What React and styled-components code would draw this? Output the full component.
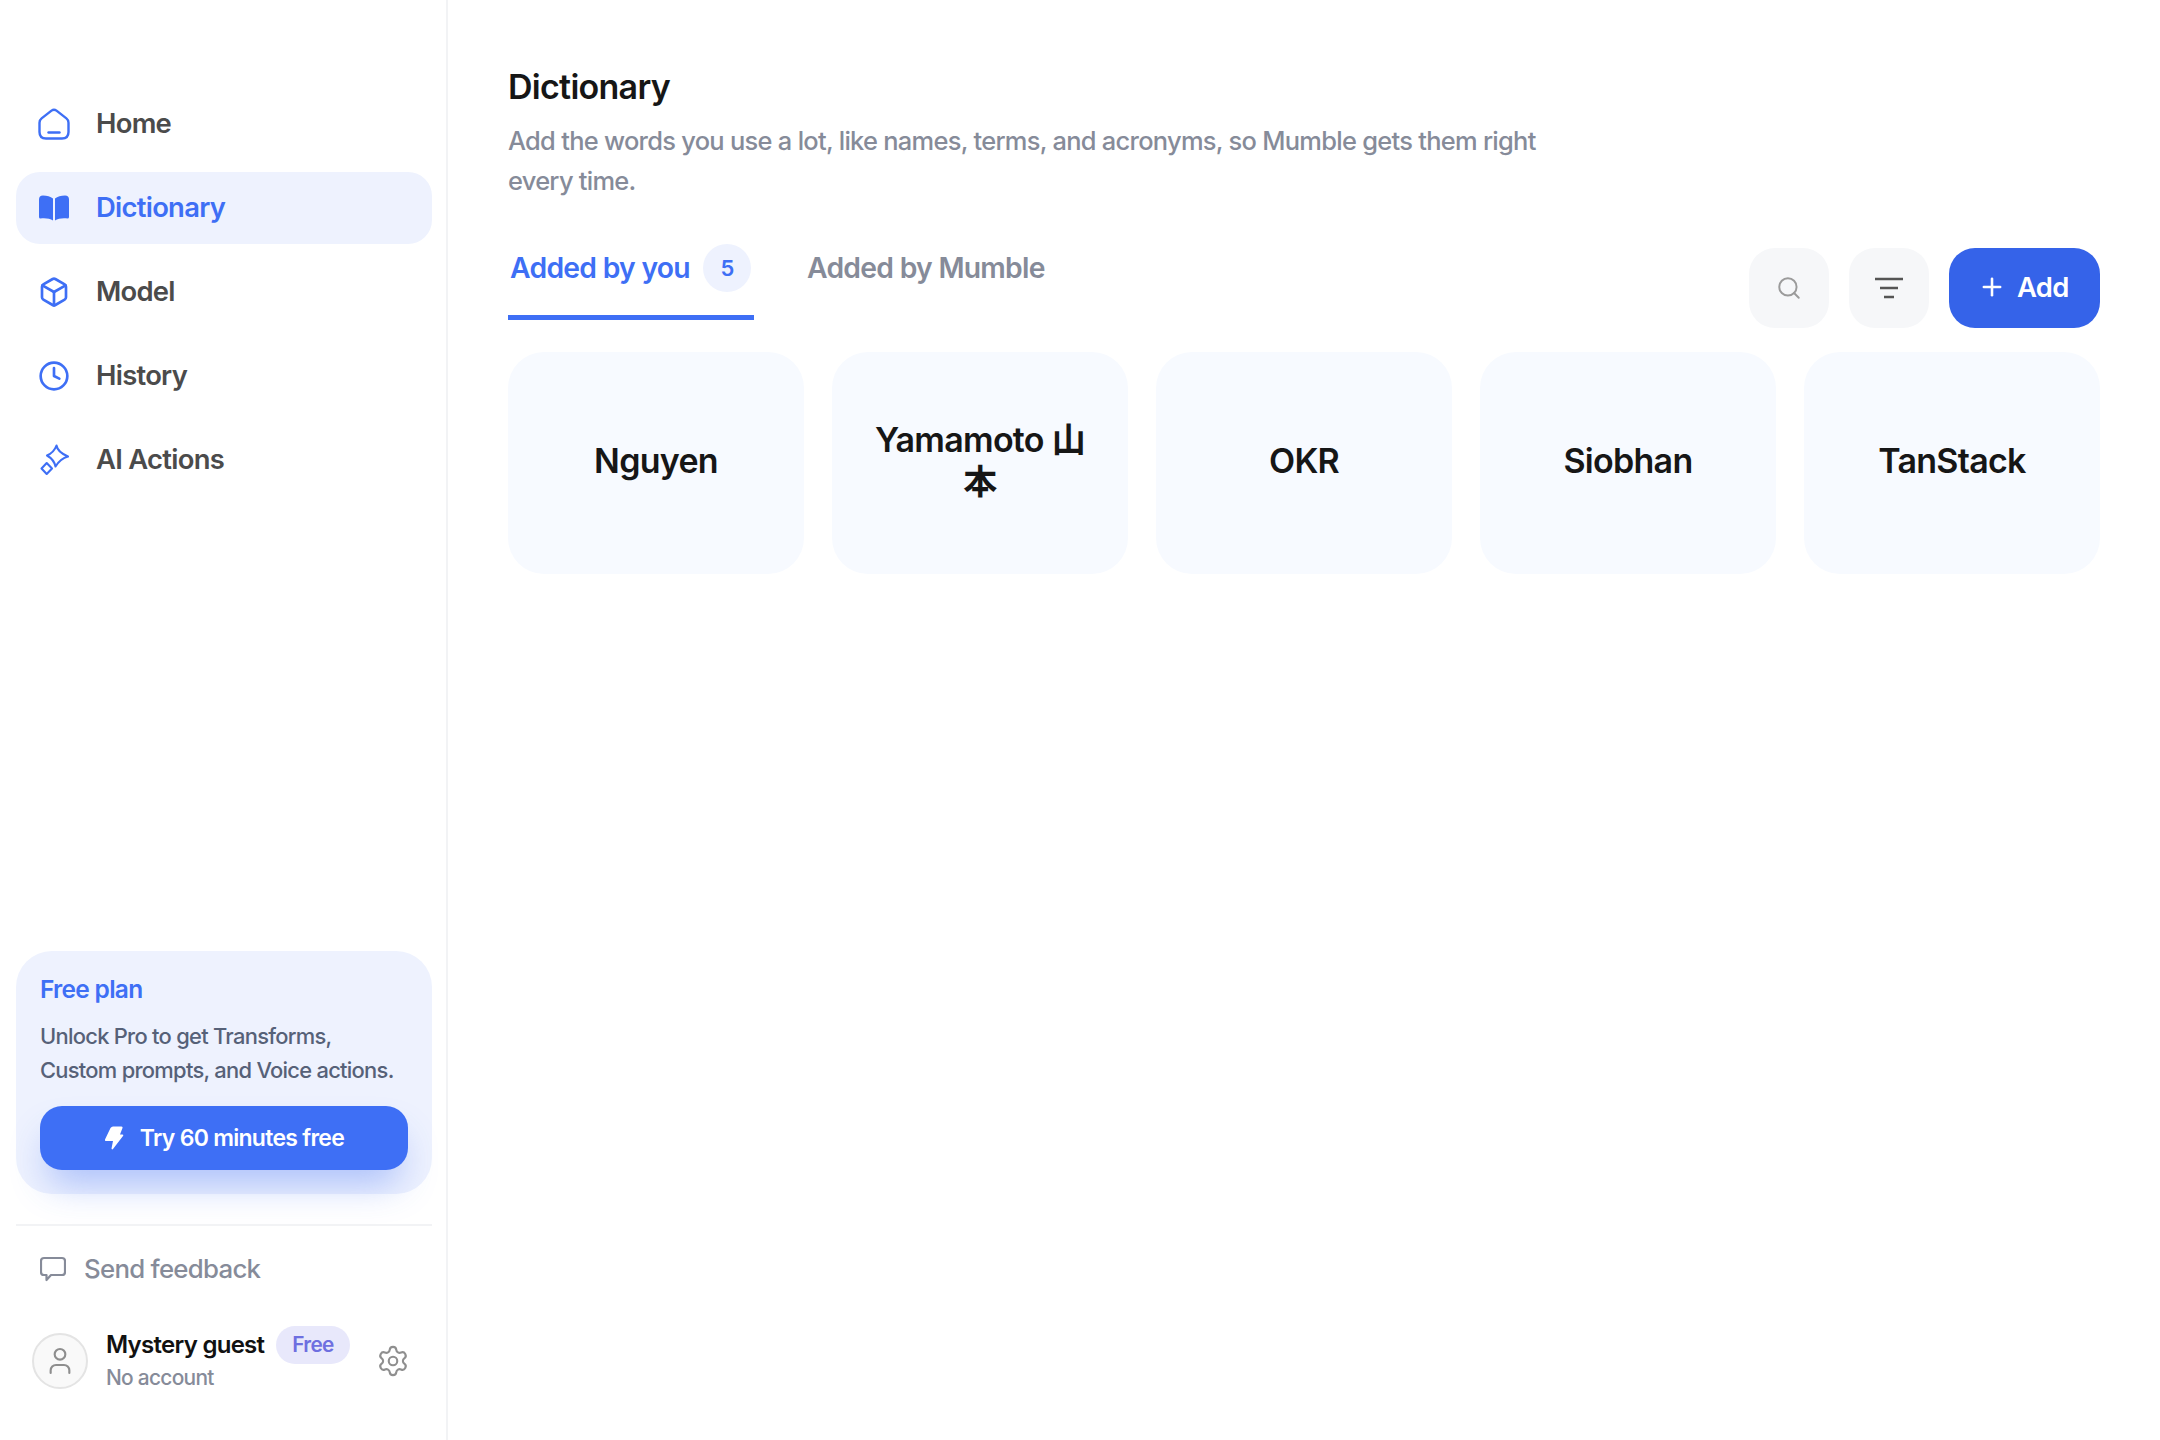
import React from "react";
import styled, { createGlobalStyle } from "styled-components";
import { Box, Clock, Search, Plus, Settings, User } from "lucide-react";

const blue = "#3e6ff5";
const muted = "#868b99";
const fontStack = `"Inter", "Noto Sans CJK JP", sans-serif`;

const Global = createGlobalStyle`
  html, body { margin: 0; padding: 0; background: #fff; }
  body {
    font-family: ${fontStack};
    letter-spacing: -0.045em;
    -webkit-font-smoothing: antialiased;
  }
  button { letter-spacing: inherit; font-family: inherit; }
`;

const Shell = styled.div`
  display: flex;
  width: 2160px;
  height: 1440px;
  overflow: hidden;
`;

const Sidebar = styled.aside`
  width: 448px;
  height: 100%;
  box-sizing: border-box;
  flex: none;
  display: flex;
  flex-direction: column;
  padding: 88px 14px 51px 16px;
  border-right: 2px solid #f2f3f5;
`;

const Nav = styled.nav`
  display: flex;
  flex-direction: column;
  gap: 12px;
`;

const NavItem = styled.a`
  display: flex;
  align-items: center;
  gap: 26px;
  height: 72px;
  padding-left: 22px;
  border-radius: 24px;
  font-size: 27.4px;
  font-weight: 600;
  color: ${(p) => (p.$active ? blue : "#4b4b4b")};
  background: ${(p) => (p.$active ? "#eef2fe" : "transparent")};
  svg {
    flex: none;
    width: 32px;
    color: ${blue};
  }
`;

const NavLabel = styled.span`
  padding-bottom: 2px;
`;

const PlanCard = styled.section`
  margin-top: auto;
  box-sizing: border-box;
  height: 243px;
  padding: 21px 24px 0;
  border-radius: 36px;
  background: #eef2fe;
`;

const PlanTitle = styled.div`
  font-size: 24.5px;
  line-height: 34px;
  font-weight: 600;
  color: ${blue};
`;

const PlanText = styled.p`
  margin: 13px 0 0;
  font-size: 21.9px;
  line-height: 34px;
  font-weight: 500;
  color: #566178;
`;

const TryButton = styled.button`
  display: flex;
  align-items: center;
  justify-content: center;
  gap: 16px;
  width: 100%;
  height: 64px;
  margin-top: 19px;
  border: 0;
  border-radius: 22px;
  background: ${blue};
  box-shadow: 0 22px 36px -8px rgba(62, 111, 245, 0.38);
  font-size: 23px;
  font-weight: 600;
  color: #fff;
`;

const Divider = styled.hr`
  width: 100%;
  height: 2px;
  margin: 30px 0 0;
  border: 0;
  background: #f2f3f5;
`;

const Feedback = styled.a`
  display: flex;
  align-items: center;
  gap: 18px;
  margin-top: 26px;
  padding-left: 24px;
  font-size: 25.8px;
  line-height: 34px;
  font-weight: 500;
  color: ${muted};
`;

const UserRow = styled.div`
  display: flex;
  align-items: center;
  margin-top: 47px;
  padding-left: 16px;
`;

const Avatar = styled.div`
  width: 56px;
  height: 56px;
  box-sizing: border-box;
  flex: none;
  display: flex;
  align-items: center;
  justify-content: center;
  border: 2px solid #e4e4e4;
  border-radius: 50%;
  background: #f9f9f9;
  color: #8e8e8e;
`;

const UserInfo = styled.div`
  margin-left: 18px;
  display: flex;
  flex-direction: column;
`;

const NameLine = styled.div`
  display: flex;
  align-items: center;
  gap: 12px;
  margin-top: -7.5px;
`;

const Name = styled.span`
  font-size: 24px;
  font-weight: 600;
  color: #111;
`;

const Badge = styled.span`
  display: flex;
  align-items: center;
  height: 38px;
  padding: 0 16px;
  border-radius: 19px;
  background: #e8e8fb;
  font-size: 20.8px;
  font-weight: 600;
  color: #6e6fe0;
`;

const Account = styled.span`
  margin-bottom: -2.5px;
  font-size: 20.9px;
  line-height: 28px;
  font-weight: 500;
  color: ${muted};
`;

const GearSlot = styled.div`
  margin-left: 26px;
  display: flex;
  color: #8f8f8f;
`;

const Main = styled.main`
  flex: 1;
  min-width: 0;
  padding: 64px 60px 0 60px;
`;

const Title = styled.h1`
  margin: 0;
  font-size: 34px;
  line-height: 46px;
  font-weight: 600;
  color: #161616;
`;

const Description = styled.p`
  margin: 11px 0 0;
  max-width: 1060px;
  font-size: 25.45px;
  line-height: 40px;
  font-weight: 500;
  color: ${muted};
`;

const TabBar = styled.div`
  display: flex;
  align-items: flex-start;
  margin-top: 43px;
`;

const Tab = styled.div`
  display: flex;
  align-items: center;
  gap: 13px;
  box-sizing: border-box;
  height: 76px;
  padding: 0 3px 24px 2px;
  font-size: 28.3px;
  font-weight: 600;
  color: ${(p) => (p.$active ? blue : muted)};
  border-bottom: 5px solid ${(p) => (p.$active ? blue : "transparent")};
  margin-right: 51px;
`;

const Count = styled.span`
  width: 48px;
  height: 48px;
  display: flex;
  align-items: center;
  justify-content: center;
  border-radius: 50%;
  background: #eef2fe;
  font-size: 22px;
`;

const Actions = styled.div`
  display: flex;
  gap: 20px;
  margin-left: auto;
  margin-top: 4px;
`;

const IconButton = styled.button`
  width: 80px;
  height: 80px;
  display: flex;
  align-items: center;
  justify-content: center;
  padding: 0;
  border: 0;
  border-radius: 26px;
  background: #f6f7f9;
  color: #9b9b9b;
`;

const AddButton = styled.button`
  width: 151px;
  height: 80px;
  display: flex;
  align-items: center;
  gap: 11px;
  padding: 0 0 2px 29px;
  border: 0;
  border-radius: 26px;
  background: #3563e9;
  font-size: 27.4px;
  font-weight: 600;
  color: #fff;
`;

const CardRow = styled.div`
  display: grid;
  grid-template-columns: repeat(5, 1fr);
  gap: 28px;
  margin-top: 24px;
`;

const WordCard = styled.div`
  height: 222px;
  box-sizing: border-box;
  display: flex;
  align-items: center;
  justify-content: center;
  padding: 0 38px 4px;
  border-radius: 36px;
  background: #f7faff;
  font-size: 34px;
  line-height: 42px;
  font-weight: 600;
  text-align: center;
  color: #161616;
`;

const HomeIcon = () => (
  <svg width="32" height="32" viewBox="0 0 32 32" fill="none" stroke="currentColor" strokeWidth="2.4" strokeLinecap="round" strokeLinejoin="round">
    <path d="M13.5 2.6 3.6 10.4Q1.5 12 1.5 14.8V24Q1.5 30.5 8 30.5H24Q30.5 30.5 30.5 24V14.8Q30.5 12 28.4 10.4L18.5 2.6Q16 .8 13.5 2.6Z" />
    <path d="M10.5 24.5H21.5" />
  </svg>
);

const BookIcon = () => (
  <svg width="32" height="32" viewBox="0 0 32 32" fill="currentColor">
    <path d="M1 7.5Q1 3.5 5 3.5C9 3.5 12.5 4.5 15 6.5V28.5C12 26.5 7.5 26 2.5 26.5Q1 26.5 1 25Z" />
    <path d="M31 7.5Q31 3.5 27 3.5C23 3.5 19.5 4.5 17 6.5V28.5C20 26.5 24.5 26 29.5 26.5Q31 26.5 31 25Z" />
  </svg>
);

const SparkIcon = () => (
  <svg width="32" height="32" viewBox="0 0 32 32" fill="none" stroke="currentColor" strokeWidth="2.1" strokeLinejoin="round">
    <path d="M18.5 1.5Q19.5 8 30 12.5 22.5 14.5 17.5 22.5 16 15.5 9 11.5 16 8.5 18.5 1.5Z" />
    <path d="M8.7 19 14 24.5 8.7 30 3.5 24.5Z" />
  </svg>
);

const BoltIcon = () => (
  <svg width="20" height="24" viewBox="0 0 20 24" fill="currentColor">
    <path d="M9 .5H17.5Q19 .5 18.5 2L16 8.5H18.5Q20 8.5 19 10L9 23Q8 24 7.5 22.5L9 15H2Q.5 15 1 13.5L6.5 2Q7.5.5 9 .5Z" />
  </svg>
);

const ChatIcon = () => (
  <svg width="26" height="26" viewBox="0 0 26 26" fill="none" stroke="currentColor" strokeWidth="2.2" strokeLinejoin="round">
    <path d="M4 2H22Q25 2 25 5V16Q25 19 22 19H11L6.5 24V19H4Q1 19 1 16V5Q1 2 4 2Z" />
  </svg>
);

const FilterIcon = () => (
  <svg width="28" height="22" viewBox="0 0 28 22" fill="none" stroke="#555" strokeWidth="2.6">
    <path d="M0 2H28M5 11H23M9 20H19" />
  </svg>
);

const navItems = [
  { label: "Home", icon: <HomeIcon /> },
  { label: "Dictionary", icon: <BookIcon />, active: true },
  { label: "Model", icon: <Box size={32} strokeWidth={2} /> },
  { label: "History", icon: <Clock size={32} strokeWidth={2} /> },
  { label: "AI Actions", icon: <SparkIcon /> },
];

const words = ["Nguyen", "Yamamoto 山本", "OKR", "Siobhan", "TanStack"];

export default function App() {
  return (
    <Shell>
      <Global />
      <Sidebar>
        <Nav>
          {navItems.map((item) => (
            <NavItem key={item.label} $active={item.active}>
              {item.icon}
              <NavLabel>{item.label}</NavLabel>
            </NavItem>
          ))}
        </Nav>
        <PlanCard>
          <PlanTitle>Free plan</PlanTitle>
          <PlanText>
            Unlock Pro to get Transforms,
            <br />
            Custom prompts, and Voice actions.
          </PlanText>
          <TryButton>
            <BoltIcon />
            Try 60 minutes free
          </TryButton>
        </PlanCard>
        <Divider />
        <Feedback>
          <ChatIcon />
          Send feedback
        </Feedback>
        <UserRow>
          <Avatar>
            <User size={32} strokeWidth={1.6} />
          </Avatar>
          <UserInfo>
            <NameLine>
              <Name>Mystery guest</Name>
              <Badge>Free</Badge>
            </NameLine>
            <Account>No account</Account>
          </UserInfo>
          <GearSlot>
            <Settings size={34} strokeWidth={1.5} />
          </GearSlot>
        </UserRow>
      </Sidebar>
      <Main>
        <Title>Dictionary</Title>
        <Description>
          Add the words you use a lot, like names, terms, and acronyms, so Mumble gets them right every time.
        </Description>
        <TabBar>
          <Tab $active>
            Added by you
            <Count>5</Count>
          </Tab>
          <Tab>Added by Mumble</Tab>
          <Actions>
            <IconButton>
              <Search size={26} strokeWidth={1.8} />
            </IconButton>
            <IconButton>
              <FilterIcon />
            </IconButton>
            <AddButton>
              <Plus size={28} strokeWidth={2.2} />
              Add
            </AddButton>
          </Actions>
        </TabBar>
        <CardRow>
          {words.map((word) => (
            <WordCard key={word}>{word}</WordCard>
          ))}
        </CardRow>
      </Main>
    </Shell>
  );
}
